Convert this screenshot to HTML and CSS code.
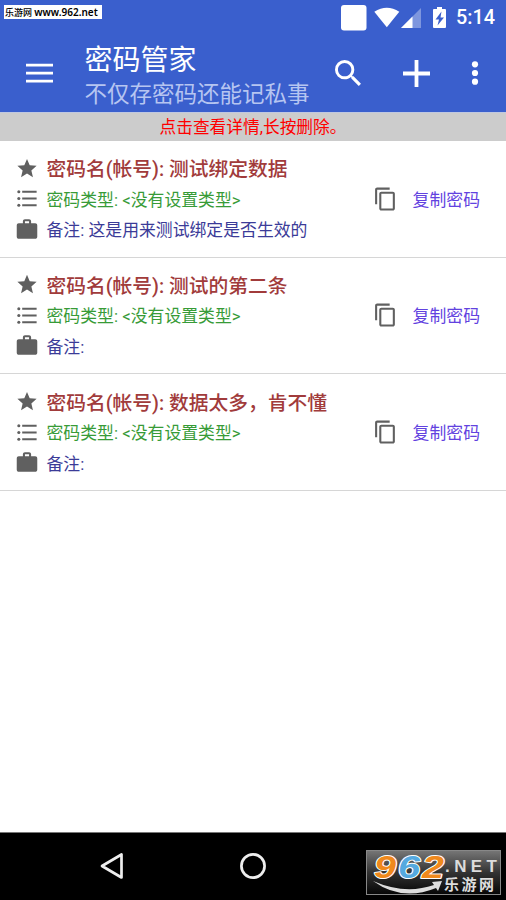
FILE: index.html
```html
<!DOCTYPE html>
<html lang="zh-CN">
<head>
<meta charset="utf-8">
<title>密码管家</title>
<link rel="stylesheet" href="styles.css">
</head>
<body>
<svg class="defs" aria-hidden="true">
  <symbol id="star" viewBox="0 0 24 24"><path d="M12 17.27 18.18 21l-1.64-7.03L22 9.24l-7.19-.61L12 2 9.19 8.63 2 9.24l5.46 4.73L5.82 21z"/></symbol>
  <symbol id="list" viewBox="0 0 24 24"><path d="M7 4h15v2H7zM7 11h15v2H7zM7 18h15v2H7z"/><circle cx="3.5" cy="5" r="1.6"/><circle cx="3.5" cy="12" r="1.6"/><circle cx="3.5" cy="19" r="1.6"/></symbol>
  <symbol id="bag" viewBox="0 0 24 24"><path d="M20 6h-4V4c0-1.11-.89-2-2-2h-4c-1.11 0-2 .89-2 2v2H4c-1.11 0-1.99.89-1.99 2L2 19c0 1.11.89 2 2 2h16c1.11 0 2-.89 2-2V8c0-1.11-.89-2-2-2zm-6 0h-4V4h4z"/></symbol>
  <symbol id="copy" viewBox="0 0 24 24"><path d="M16 1H4c-1.1 0-2 .9-2 2v14h2V3h12zm3 4H8c-1.1 0-2 .9-2 2v14c0 1.1.9 2 2 2h11c1.1 0 2-.9 2-2V7c0-1.1-.9-2-2-2zm0 16H8V7h11z"/></symbol>
</svg>
<div class="screen">
  <header class="header">
    <div class="status">
      <svg class="status-icons" viewBox="0 0 112 32">
        <rect x="1" y="4" width="25.500" height="25.500" rx="3"/>
        <path d="M34.300 10.800Q46.800 2.600 59.300 10.800L46.800 26.300z"/>
        <path class="dim" d="M81 7v20H61z"/><path d="M72.500 15.500V27H61z"/>
        <path fill-rule="evenodd" d="M97 6h5v2h3q1 0 1 1v17q0 1-1 1h-11q-1 0-1-1V9q0-1 1-1h3zM101.500 10.500l-6 8h3.500l-1.500 6 6.500-8h-3.500z"/>
      </svg>
      <span class="clock">5:14</span>
    </div>
    <div class="appbar">
      <svg class="menu" viewBox="0 0 27 20"><path d="M0 .7h27v2.700H0zM0 8.700h27v2.700H0zM0 16.700h27v2.700H0z"/></svg>
      <div class="titles">
        <h1 class="title">密码管家</h1>
        <p class="subtitle">不仅存密码还能记私事</p>
      </div>
      <svg class="search" viewBox="3 3 17.500 17.500"><path d="M15.500 14h-.79l-.28-.27A6.471 6.471 0 0 0 16 9.500 6.500 6.500 0 1 0 9.500 16c1.610 0 3.090-.59 4.230-1.570l.27.28v.79l5 4.990L20.490 19zm-6 0C7.010 14 5 11.990 5 9.500S7.010 5 9.500 5 14 7.010 14 9.500 11.990 14 9.500 14z"/></svg>
      <svg class="plus" viewBox="0 0 27 27"><path d="M11.600 0h3.800v11.600H27v3.800H15.400V27h-3.800V15.400H0v-3.800h11.600z"/></svg>
      <svg class="more" viewBox="0 0 8 26"><circle cx="4" cy="4.300" r="3.100"/><circle cx="4" cy="13" r="3.100"/><circle cx="4" cy="21.700" r="3.100"/></svg>
    </div>
    <div class="source-tag">乐游网 <span class="source-url">www.962.net</span></div>
  </header>
  <p class="hint">点击查看详情,长按删除。</p>
  <main class="entries">
    <section class="entry">
      <div class="row name"><svg class="icon"><use href="#star"/></svg><span>密码名(帐号): 测试绑定数据</span></div>
      <div class="row type"><svg class="icon"><use href="#list"/></svg><span>密码类型: &lt;没有设置类型&gt;</span>
        <div class="copy"><svg class="copy-icon"><use href="#copy"/></svg><span>复制密码</span></div></div>
      <div class="row note"><svg class="icon bag"><use href="#bag"/></svg><span>备注: 这是用来测试绑定是否生效的</span></div>
    </section>
    <section class="entry">
      <div class="row name"><svg class="icon"><use href="#star"/></svg><span>密码名(帐号): 测试的第二条</span></div>
      <div class="row type"><svg class="icon"><use href="#list"/></svg><span>密码类型: &lt;没有设置类型&gt;</span>
        <div class="copy"><svg class="copy-icon"><use href="#copy"/></svg><span>复制密码</span></div></div>
      <div class="row note"><svg class="icon bag"><use href="#bag"/></svg><span>备注:</span></div>
    </section>
    <section class="entry">
      <div class="row name"><svg class="icon"><use href="#star"/></svg><span>密码名(帐号): 数据太多，肯不懂</span></div>
      <div class="row type"><svg class="icon"><use href="#list"/></svg><span>密码类型: &lt;没有设置类型&gt;</span>
        <div class="copy"><svg class="copy-icon"><use href="#copy"/></svg><span>复制密码</span></div></div>
      <div class="row note"><svg class="icon bag"><use href="#bag"/></svg><span>备注:</span></div>
    </section>
  </main>
  <nav class="navbar">
    <svg class="nav-back" viewBox="0 0 24 28"><path d="M21.500 2.500v23L2 14z"/></svg>
    <svg class="nav-home" viewBox="0 0 28 28"><circle cx="14" cy="14" r="11.600"/></svg>
    <svg class="logo" viewBox="0 0 136 46">
      <defs><linearGradient id="plate" x1="0" y1="0" x2="0" y2="1"><stop offset="0" stop-color="#777"/><stop offset=".5" stop-color="#333"/><stop offset="1" stop-color="#050505"/></linearGradient></defs>
      <rect class="plate" x=".5" y=".5" width="134" height="44"/>
      <g class="digits">
        <text class="orange" x="8" y="27.500" textLength="22" lengthAdjust="spacingAndGlyphs">9</text>
        <text class="blue" x="32" y="27.500" textLength="22" lengthAdjust="spacingAndGlyphs">6</text>
        <text class="orange" x="56" y="27.500" textLength="22" lengthAdjust="spacingAndGlyphs">2</text>
      </g>
      <path class="swoosh" d="M7 31Q39 45 68 35L66 32 76 31 72 41 70 38Q36 52 7 31z"/>
      <text class="net" x="79" y="21.500" textLength="52">.NET</text>
      <text class="site" x="78" y="40" textLength="50">乐游网</text>
    </svg>
  </nav>
</div>
</body>
</html>
```

FILE: styles.css
```css
* { box-sizing: border-box; }
body {
  margin: 0;
  background: #fff;
  font-family: Roboto, "Noto Sans CJK SC", sans-serif;
}
h1, p { margin: 0; font-weight: 400; }
svg { display: block; flex: none; fill: #fff; }
.defs { position: absolute; width: 0; height: 0; }
.screen { width: 506px; height: 900px; display: flex; flex-direction: column; overflow: hidden; }

.header { position: relative; height: 112px; flex: none; background: #3a5fcd; color: #fff; }
.status { display: flex; justify-content: flex-end; align-items: center; height: 34px; padding-right: 11px; }
.status-icons { width: 112px; height: 32px; margin: -1px 4px 0 0; }
.clock { width: 39px; padding-top: 1px; font-size: 19.800px; font-weight: 500; line-height: 36px; white-space: nowrap; }
.dim { opacity: .35; }
.appbar { display: flex; align-items: center; height: 78px; padding-left: 26px; }
.menu { width: 27px; height: 20px; margin-top: -1px; }
.titles { width: 250px; margin-left: 31.500px; }
.title { font-size: 28px; line-height: 34px; margin-top: 8px; }
.subtitle { font-size: 22.500px; line-height: 32px; color: #b6c5f1; white-space: nowrap; }
.search { width: 26px; height: 26px; margin-left: .5px; }
.plus { width: 27px; height: 27px; margin-left: 41.500px; }
.more { width: 8px; height: 26px; margin-left: 41.500px; }
.source-tag {
  position: absolute; left: 4px; top: 5px; width: 98px; height: 14px; padding-left: 1px;
  background: #fff; color: #000; font-size: 9px; font-weight: 500; line-height: 14px; white-space: nowrap;
}
.source-url { font-family: "Noto Sans", sans-serif; font-size: 10px; font-weight: 600; }

.hint {
  flex: none; height: 29px; background: #ccc; color: #f00; font-size: 16.700px; line-height: 30px;
  text-align: center; border-top: 1px solid #c0c8e0;
}
.entries { flex: 1; }
.entry { height: 116.670px; padding: 11.500px 16px 0; border-bottom: 1px solid #d6d6d6; }
.row { display: flex; align-items: center; gap: 9px; height: 30.500px; font-size: 16.850px; white-space: nowrap; }
.icon { width: 22px; height: 22px; margin-right: -.5px; transform: translateY(.5px) scale(1.050); fill: #606060; }
.name { font-size: 19.750px; font-weight: 500; color: #a13b3b; }
.type { color: #379b37; }
.note { color: #3b3b98; }
.bag { transform: translateY(.5px) scale(1.120); }
.copy { display: flex; align-items: center; gap: 15px; margin-left: auto; padding-right: 10px; color: #6242df; }
.copy-icon { width: 25px; height: 25px; fill: #606060; transform: translateY(.5px); }

.navbar { display: flex; align-items: center; flex: none; height: 68px; padding-left: 100px; background: #000; border-top: 1px solid #777; }
.nav-back { width: 24px; height: 28px; margin-top: -1px; fill: none; stroke: #eee; stroke-width: 2.700; stroke-linejoin: round; }
.nav-home { width: 28px; height: 28px; margin: -1px 0 0 115px; fill: none; stroke: #eee; stroke-width: 2.700; }
.logo { width: 136px; height: 46px; margin: 12px 0 0 99px; }
.plate { fill: url(#plate); stroke: #888; }
.digits { font: italic 700 32px "Liberation Sans", sans-serif; stroke: #fff; stroke-width: 2px; paint-order: stroke; stroke-linejoin: round; }
.orange { fill: #ef891d; }
.blue { fill: #55a9df; }
.swoosh { fill: #ddd; }
.net { font: 700 17px "Liberation Sans", sans-serif; fill: #ddd; }
.site { font: 700 15px "Noto Sans CJK SC", sans-serif; fill: #ddd; }
```
